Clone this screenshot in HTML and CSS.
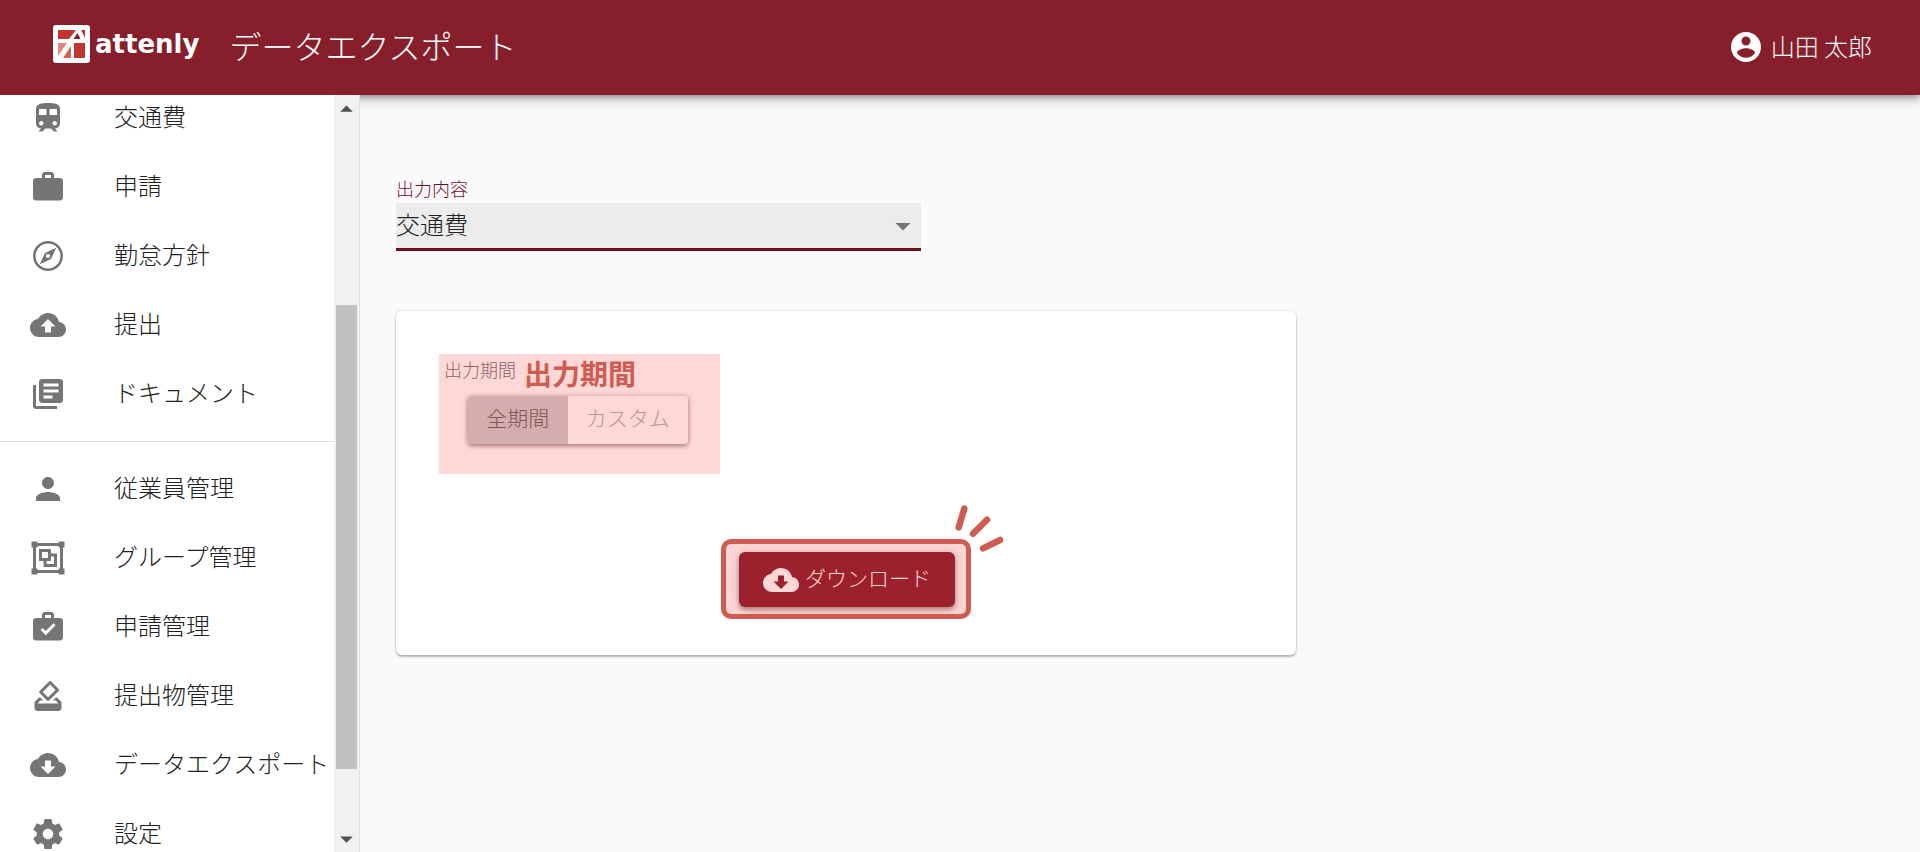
FILE: index.html
```html
<!DOCTYPE html>
<html lang="ja">
<head>
<meta charset="utf-8">
<title>データエクスポート</title>
<link rel="stylesheet" href="styles.css">
</head>
<body>
<header class="app-bar">
  <a class="brand" href="#">
    <svg class="brand-mark" viewBox="0 0 37 38" aria-hidden="true">
      <rect width="37" height="38" rx="3" fill="#fff"/>
      <path d="M5 5h18l-7 9H5z" fill="#c0352f"/>
      <path d="M24.500 8l3 6h-7z" fill="#871e2b"/>
      <path d="M28 5h4v8z" fill="#c0352f"/>
      <path d="M5 18h9L5 31z" fill="#e0897f"/>
      <path d="M18 21v12h-8z" fill="#d0604f"/>
      <path d="M21 18h11v15H21z" fill="#c0352f"/>
    </svg>
    <span class="brand-name">attenly</span>
  </a>
  <h1 class="page-title">データエクスポート</h1>
  <button class="account" type="button">
    <svg class="icon" viewBox="0 0 24 24" aria-hidden="true"><path d="M12 2C6.480 2 2 6.480 2 12s4.480 10 10 10 10-4.480 10-10S17.520 2 12 2zm0 3c1.660 0 3 1.340 3 3s-1.340 3-3 3-3-1.340-3-3 1.340-3 3-3zm0 14.200c-2.500 0-4.710-1.280-6-3.220.03-1.990 4-3.080 6-3.080 1.990 0 5.970 1.090 6 3.080-1.290 1.940-3.500 3.220-6 3.220z"/></svg>
    <span>山田 太郎</span>
  </button>
</header>
<div class="layout">
  <aside class="sidebar">
    <nav class="menu">
      <ul class="menu-group">
        <li><a class="menu-item" href="#"><svg class="icon" viewBox="0 0 24 24" aria-hidden="true"><path d="M12 2c-4 0-8 .5-8 4v9.500C4 17.430 5.570 19 7.500 19L6 20.500v.5h2.230l2-2H14l2 2h2v-.5L16.500 19c1.930 0 3.500-1.570 3.500-3.500V6c0-3.500-3.580-4-8-4zM7.500 17c-.83 0-1.500-.67-1.500-1.500S6.670 14 7.500 14s1.500.67 1.500 1.500S8.330 17 7.500 17zm3.500-7H6V6h5v4zm2 0V6h5v4h-5zm3.500 7c-.83 0-1.500-.67-1.500-1.500s.67-1.500 1.500-1.500 1.500.67 1.500 1.500-.67 1.500-1.500 1.500z"/></svg><span>交通費</span></a></li>
        <li><a class="menu-item" href="#"><svg class="icon" viewBox="0 0 24 24" aria-hidden="true"><path d="M20 6h-4V4c0-1.110-.89-2-2-2h-4c-1.110 0-2 .89-2 2v2H4c-1.110 0-1.990.89-1.990 2L2 19c0 1.110.89 2 2 2h16c1.110 0 2-.89 2-2V8c0-1.110-.89-2-2-2zm-6 0h-4V4h4v2z"/></svg><span>申請</span></a></li>
        <li><a class="menu-item" href="#"><svg class="icon" viewBox="0 0 24 24" aria-hidden="true"><path d="M12 2C6.480 2 2 6.480 2 12s4.480 10 10 10 10-4.480 10-10S17.520 2 12 2zm0 18.300A8.300 8.300 0 1 1 12 3.700a8.300 8.300 0 0 1 0 16.600zM6.500 17.500l7.510-3.490L17.500 6.500 9.990 9.990 6.500 17.500zM12 10.600a1.400 1.400 0 1 1 0 2.800 1.400 1.400 0 0 1 0-2.800z" fill-rule="evenodd"/></svg><span>勤怠方針</span></a></li>
        <li><a class="menu-item" href="#"><svg class="icon" viewBox="0 0 24 24" aria-hidden="true"><path d="M19.350 10.040C18.670 6.590 15.640 4 12 4 9.110 4 6.600 5.640 5.350 8.040 2.340 8.360 0 10.910 0 14c0 3.310 2.690 6 6 6h13c2.760 0 5-2.240 5-5 0-2.640-2.050-4.780-4.650-4.960zM14 13v4h-4v-4H7l5-5 5 5h-3z"/></svg><span>提出</span></a></li>
        <li><a class="menu-item" href="#"><svg class="icon" viewBox="0 0 24 24" aria-hidden="true"><path d="M4 6H2v14c0 1.100.9 2 2 2h14v-2H4V6zm16-4H8c-1.100 0-2 .9-2 2v12c0 1.100.9 2 2 2h12c1.100 0 2-.9 2-2V4c0-1.100-.9-2-2-2zm-1 9H9V9h10v2zm-4 4H9v-2h6v2zm4-8H9V5h10v2z"/></svg><span>ドキュメント</span></a></li>
      </ul>
      <ul class="menu-group">
        <li><a class="menu-item" href="#"><svg class="icon" viewBox="0 0 24 24" aria-hidden="true"><path d="M12 12c2.210 0 4-1.790 4-4s-1.790-4-4-4-4 1.790-4 4 1.790 4 4 4zm0 2c-2.670 0-8 1.340-8 4v2h16v-2c0-2.660-5.330-4-8-4z"/></svg><span>従業員管理</span></a></li>
        <li><a class="menu-item" href="#"><svg class="icon" viewBox="0 0 24 24" aria-hidden="true"><path d="M1 1h4v1h14V1h4v4h-1v14h1v4h-4v-1H5v1H1v-4h1V5H1V1zm4 3v1H4v14h1v1h14v-1h1V5h-1V4H5zm1 2h8v3h4v9H9v-4H6V6zm2 2v4h4V8H8zm6 3v3h-3v2h5v-5h-2z" fill-rule="evenodd"/></svg><span>グループ管理</span></a></li>
        <li><a class="menu-item" href="#"><svg class="icon" viewBox="0 0 24 24" aria-hidden="true"><path d="M20 6h-4V4c0-1.110-.89-2-2-2h-4c-1.110 0-2 .89-2 2v2H4c-1.110 0-2 .89-2 2v11c0 1.110.89 2 2 2h16c1.110 0 2-.89 2-2V8c0-1.110-.89-2-2-2zM10 4h4v2h-4V4zm.5 13.500L7 14l1.410-1.410 2.090 2.090 5.180-5.180 1.410 1.410-6.590 6.590z"/></svg><span>申請管理</span></a></li>
        <li><a class="menu-item" href="#"><svg class="icon" viewBox="0 0 24 24" aria-hidden="true"><path d="M18 13h-.68l-2 2h1.910L19 17H5l1.780-2h2.050l-2-2H6l-3 3v4c0 1.100.89 2 1.990 2H19c1.100 0 2-.89 2-2v-4l-3-3zm-1-5.050l-4.950 4.950-3.540-3.540 4.950-4.950L17 7.950zm-4.240-5.660L6.390 8.660c-.39.39-.39 1.020 0 1.410l4.950 4.950c.39.39 1.020.39 1.410 0l6.360-6.360c.39-.39.39-1.020 0-1.410L14.160 2.300c-.38-.4-1.010-.4-1.400-.01z"/></svg><span>提出物管理</span></a></li>
        <li><a class="menu-item" href="#"><svg class="icon" viewBox="0 0 24 24" aria-hidden="true"><path d="M19.350 10.040C18.670 6.590 15.640 4 12 4 9.110 4 6.600 5.640 5.350 8.040 2.340 8.360 0 10.910 0 14c0 3.310 2.690 6 6 6h13c2.760 0 5-2.240 5-5 0-2.640-2.050-4.780-4.650-4.960zM17 13l-5 5-5-5h3V9h4v4h3z"/></svg><span>データエクスポート</span></a></li>
        <li><a class="menu-item" href="#"><svg class="icon" viewBox="0 0 24 24" aria-hidden="true"><path d="M19.430 12.980c.04-.32.07-.64.07-.98s-.03-.66-.07-.98l2.110-1.650c.19-.15.24-.42.12-.64l-2-3.460c-.12-.22-.39-.3-.61-.22l-2.490 1c-.52-.4-1.080-.73-1.690-.98l-.38-2.650C14.460 2.180 14.250 2 14 2h-4c-.25 0-.46.18-.49.42l-.38 2.650c-.61.25-1.170.59-1.690.98l-2.490-1c-.23-.09-.49 0-.61.22l-2 3.460c-.13.22-.07.49.12.64l2.110 1.650c-.04.32-.07.65-.07.98s.03.66.07.98l-2.110 1.650c-.19.15-.24.42-.12.64l2 3.460c.12.22.39.3.61.22l2.490-1c.52.4 1.080.73 1.690.98l.38 2.650c.03.24.24.42.49.42h4c.25 0 .46-.18.49-.42l.38-2.650c.61-.25 1.170-.59 1.690-.98l2.490 1c.23.09.49 0 .61-.22l2-3.460c.12-.22.07-.49-.12-.64l-2.110-1.650zM12 15.500c-1.930 0-3.500-1.570-3.500-3.500s1.570-3.500 3.500-3.500 3.500 1.570 3.500 3.500-1.570 3.500-3.500 3.500z"/></svg><span>設定</span></a></li>
      </ul>
    </nav>
    <div class="scrollbar" aria-hidden="true">
      <svg class="scroll-arrow" viewBox="0 0 24 24"><path d="M12 10l6 6H6z"/></svg>
      <div class="scroll-track"><div class="scroll-thumb"></div></div>
      <svg class="scroll-arrow" viewBox="0 0 24 24"><path d="M6 9h12l-6 6z"/></svg>
    </div>
  </aside>
  <main class="content">
    <div class="field">
      <label class="field-label" for="output-type">出力内容</label>
      <div class="select-box">
        <select class="select" id="output-type"><option>交通費</option></select>
        <svg class="select-arrow icon" viewBox="0 0 24 24" aria-hidden="true"><path d="M7 10l5 5 5-5z"/></svg>
      </div>
    </div>
    <section class="card">
      <div class="period">
        <div class="period-head">
          <span class="period-label" id="period-label">出力期間</span>
          <strong class="period-note">出力期間</strong>
        </div>
        <div class="toggle" role="group" aria-labelledby="period-label">
          <button class="toggle-button toggle-selected" type="button" aria-pressed="true">全期間</button>
          <button class="toggle-button" type="button" aria-pressed="false">カスタム</button>
        </div>
      </div>
      <div class="callout">
        <button class="download" type="button">
          <svg class="icon" viewBox="0 0 24 24" aria-hidden="true"><path d="M19.350 10.040C18.670 6.590 15.640 4 12 4 9.110 4 6.600 5.640 5.350 8.040 2.340 8.360 0 10.910 0 14c0 3.310 2.690 6 6 6h13c2.760 0 5-2.240 5-5 0-2.640-2.050-4.780-4.650-4.960zM17 13l-5 5-5-5h3V9h4v4h3z"/></svg>
          <span>ダウンロード</span>
        </button>
        <svg class="burst" viewBox="0 0 50 50" aria-hidden="true"><path d="M5.700 22.300l5.600-18.600M20 28.700l14-14M30 43.300l17-8.300"/></svg>
      </div>
    </section>
  </main>
</div>
</body>
</html>
```

FILE: styles.css
```css
* {
  box-sizing: border-box;
}

body {
  display: flex;
  flex-direction: column;
  height: 100vh;
  margin: 0;
  overflow: hidden;
  background: #fafafa;
  color: #212121;
  font-family: "Noto Sans CJK JP", sans-serif;
  font-size: 24px;
  font-weight: 300;
  line-height: 36px;
}

button,
select {
  border: 0;
  font: inherit;
  cursor: pointer;
}

.icon {
  flex: none;
  width: 36px;
  height: 36px;
  fill: currentColor;
}

.app-bar {
  position: relative;
  z-index: 1;
  display: flex;
  flex: none;
  align-items: center;
  height: 95px;
  padding: 0 48px 0 53px;
  background: #871e2b;
  box-shadow: 0 3px 6px rgba(0, 0, 0, 0.3), 0 6px 12px rgba(0, 0, 0, 0.15);
  color: #fff;
}

.brand {
  display: flex;
  align-items: center;
  gap: 5px;
  margin-right: 30px;
  padding-bottom: 7px;
  color: #fff;
  text-decoration: none;
}

.brand-mark {
  width: 37px;
  height: 38px;
}

.brand-name {
  font-family: "DejaVu Sans", sans-serif;
  font-size: 26px;
  font-weight: 700;
  line-height: 38px;
}

.page-title {
  flex: 1;
  margin: 0;
  padding-bottom: 6px;
  font-size: 32px;
  font-weight: 300;
  line-height: 48px;
}

.account {
  display: flex;
  align-items: center;
  gap: 7px;
  padding: 0 0 2px;
  background: none;
  color: #fff;
}

.account span {
  padding-bottom: 2px;
}

.layout {
  display: flex;
  flex: 1;
  min-height: 0;
}

.sidebar {
  position: relative;
  z-index: 2;
  display: flex;
  flex: none;
  width: 360px;
  border-right: 1px solid #e0e0e0;
  background: #fff;
}

.menu {
  flex: 1;
  overflow: hidden;
}

.menu-group {
  margin: 0;
  padding: 12px 0;
  list-style: none;
}

.menu-group:first-child {
  margin-top: -24px;
  padding-bottom: 13px;
  border-bottom: 1px solid #e0e0e0;
}

.menu-item {
  display: flex;
  align-items: center;
  gap: 48px;
  height: 69px;
  padding-left: 30px;
  color: #212121;
  text-decoration: none;
  white-space: nowrap;
}

.menu-item .icon {
  color: #757575;
}

.menu-item span {
  padding-bottom: 4px;
}

.scrollbar {
  display: flex;
  flex-direction: column;
  width: 25px;
  background: #f1f1f1;
}

.scroll-arrow {
  width: 25px;
  height: 25px;
  fill: #505050;
}

.scroll-track {
  display: flex;
  flex: 1;
  flex-direction: column;
  justify-content: flex-end;
  padding: 0 2px 58px;
}

.scroll-thumb {
  height: 71.5%;
  background: #c1c1c1;
}

.content {
  flex: 1;
  padding: 80px 36px 36px;
}

.field {
  width: 100%;
  max-width: 525px;
  margin-bottom: 60px;
}

.field-label {
  display: block;
  padding-bottom: 2px;
  color: #720e1e;
  font-size: 18px;
  line-height: 26px;
}

.select-box {
  display: grid;
  align-items: center;
  height: 48px;
  border-bottom: 3px solid #720e1e;
  background: #ececec;
}

.select,
.select-arrow {
  grid-area: 1 / 1;
}

.select {
  width: 100%;
  padding: 0 48px 4px 0;
  appearance: none;
  background: none;
  color: #212121;
  outline: 0;
}

.select-arrow {
  justify-self: end;
  color: #757575;
  pointer-events: none;
}

.card {
  display: flex;
  flex-direction: column;
  max-width: 900px;
  padding: 43px 43px 36px;
  border-radius: 6px;
  background: #fff;
  box-shadow: 0 2px 2px rgba(0, 0, 0, 0.25), 0 0 3px rgba(0, 0, 0, 0.16);
}

.period {
  align-self: flex-start;
  width: 281px;
  padding: 0 32px 30px 29px;
  background: #fed7d7;
}

.period-head {
  display: flex;
  gap: 8px;
  height: 42px;
  margin-left: -24px;
  white-space: nowrap;
}

.period-label {
  color: #8b6464;
  font-size: 18px;
  line-height: 30px;
}

.period-note {
  color: #cf5c51;
  font-size: 28px;
  font-weight: 700;
  line-height: 38px;
}

.toggle {
  display: flex;
  height: 48px;
  border-radius: 4px;
  box-shadow: 0 2px 4px rgba(90, 30, 30, 0.45), 0 0 6px rgba(90, 30, 30, 0.18);
}

.toggle-button {
  flex: 1 0 auto;
  padding: 0 18px 7px;
  border-radius: 0 4px 4px 0;
  background: #fed7d7;
  color: #bb9292;
  font-size: 21px;
}

.toggle-selected {
  border-radius: 4px 0 0 4px;
  background: #d4aeae;
  color: #7e5656;
}

.callout {
  position: relative;
  align-self: center;
  margin-top: 65px;
  padding: 8px 11px 7px 13px;
  border: 5px solid #cf5c51;
  border-radius: 10px;
  background: #fdd5d5;
}

.download {
  display: flex;
  align-items: center;
  gap: 6px;
  height: 55px;
  padding: 0 24px;
  border-radius: 6px;
  background: #9d212d;
  box-shadow: 0 3px 5px rgba(90, 20, 20, 0.4), 0 0 8px rgba(90, 20, 20, 0.15);
  color: #fed7d7;
  font-size: 21px;
}

.download span {
  padding-bottom: 5px;
}

.burst {
  position: absolute;
  top: -39px;
  right: -37px;
  width: 50px;
  height: 50px;
  fill: none;
  stroke: #cf5c51;
  stroke-linecap: round;
  stroke-width: 6.500;
}
```
